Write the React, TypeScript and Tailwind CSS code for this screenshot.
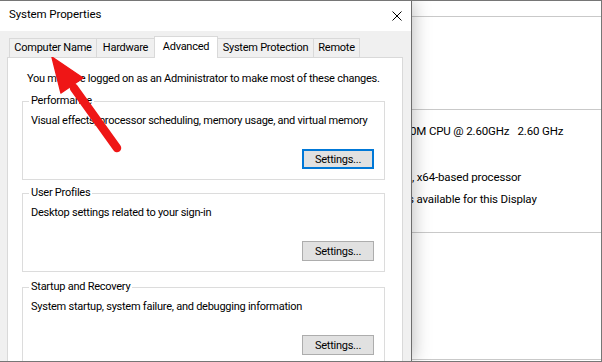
import React from "react";

interface GroupBoxProps {
  title: string;
  text: string;
  focused?: boolean;
  className?: string;
}

function SettingsButton({ focused }: { focused?: boolean }) {
  return (
    <button
      className={`w-[72px] h-[20px] bg-[#e1e1e1] text-black leading-none flex items-center justify-center ${
        focused ? "border-2 border-[#0078d7]" : "border border-[#adadad]"
      }`}
    >
      Settings...
    </button>
  );
}

function GroupBox({ title, text, focused, className }: GroupBoxProps) {
  return (
    <fieldset className={`ml-[14px] w-[363px] border border-[#dcdcdc] pl-[8px] pr-[10px] pb-[10px] ${className ?? ""}`}>
      <legend className="-ml-[2px] px-[2px] leading-[16px]">{title}</legend>
      <p className="mt-[4px] leading-[16px] whitespace-nowrap">{text}</p>
      <div className="mt-[20px] flex justify-end">
        <SettingsButton focused={focused} />
      </div>
    </fieldset>
  );
}

const tabs = [
  { label: "Computer Name", w: "w-[88px]" },
  { label: "Hardware", w: "w-[59px]" },
  { label: "Advanced", w: "w-[64px]", active: true },
  { label: "System Protection", w: "w-[97px]" },
  { label: "Remote", w: "w-[47px]" },
];

export default function App() {
  return (
    <div className="relative w-[602px] h-[362px] overflow-hidden bg-white border-t border-r border-b border-[#767676] text-[11px] text-black font-['Roboto','Liberation_Sans',sans-serif] tracking-[-0.25px]">
      {/* fenêtre derrière (System) */}
      <div className="flex flex-col h-full pl-[412px] text-[11.5px] tracking-[-0.15px]">
        <div className="h-[16px] border-b border-[#c9c9c9]" />
        <div className="h-[93px] border-b border-[#c9c9c9]" />
        <div className="h-[123px] border-b border-[#c9c9c9] pt-[13px]">
          <p className="-ml-[2px] leading-[16px] whitespace-pre">0M CPU @ 2.60GHz   2.60 GHz</p>
          <p className="mt-[30px] leading-[16px] whitespace-pre">, x64-based processor</p>
          <p className="mt-[6px] -ml-[4px] leading-[16px] whitespace-pre">s available for this Display</p>
        </div>
        <div className="h-[127px] border-b border-[#c9c9c9]" />
      </div>

      {/* dialog System Properties */}
      <div className="absolute left-0 top-0 w-[412px] h-[360px] flex flex-col bg-[#f0f0f0] border-r border-[#6d6d6d] shadow-[0_0_18px_rgba(0,0,0,0.3)] overflow-hidden">
        <div className="h-[30px] shrink-0 bg-white flex items-center justify-between pl-[9px] pr-[9px] pb-[2px]">
          <span className="text-[11.5px] tracking-[-0.1px]">System Properties</span>
          <svg width="10" height="10" viewBox="0 0 10 10" className="mt-[1px]">
            <path d="M0.5 0.5 L9.5 9.5 M9.5 0.5 L0.5 9.5" stroke="#000" strokeWidth="1" fill="none" />
          </svg>
        </div>

        <div className="relative z-10 mt-[5px] ml-[9px] h-[21px] flex items-end shrink-0">
          {tabs.map((t, i) =>
            t.active ? (
              <div
                key={t.label}
                className={`${t.w} h-[22px] -mb-px -ml-px relative z-10 bg-white border border-b-0 border-[#d9d9d9] flex items-center justify-center`}
              >
                {t.label}
              </div>
            ) : (
              <div
                key={t.label}
                className={`${t.w} h-[19px] ${i > 0 ? "-ml-px" : ""} bg-[#f0f0f0] border border-b-0 border-[#d9d9d9] flex items-center justify-center pt-px`}
              >
                {t.label}
              </div>
            )
          )}
        </div>

        <div className="ml-[7px] w-[396px] h-[340px] shrink-0 bg-white border border-[#d9d9d9]">
          <p className="mt-[13px] pl-[19px] leading-[16px] whitespace-nowrap">
            You must be logged on as an Administrator to make most of these changes.
          </p>
          <GroupBox
            className="mt-[6px]"
            title="Performance"
            text="Visual effects, processor scheduling, memory usage, and virtual memory"
            focused
          />
          <GroupBox className="mt-[5px]" title="User Profiles" text="Desktop settings related to your sign-in" />
          <GroupBox
            className="mt-[7px]"
            title="Startup and Recovery"
            text="System startup, system failure, and debugging information"
          />
        </div>
      </div>

      {/* flèche rouge */}
      <svg className="absolute left-0 top-0 pointer-events-none" width="412" height="360" viewBox="0 0 412 360">
        <line x1="74" y1="87" x2="117" y2="147" stroke="#ef1616" strokeWidth="8.5" strokeLinecap="round" />
        <polygon points="52,56 83,77 61,92" fill="#ef1616" stroke="#ef1616" strokeWidth="1.5" strokeLinejoin="round" />
      </svg>
    </div>
  );
}
